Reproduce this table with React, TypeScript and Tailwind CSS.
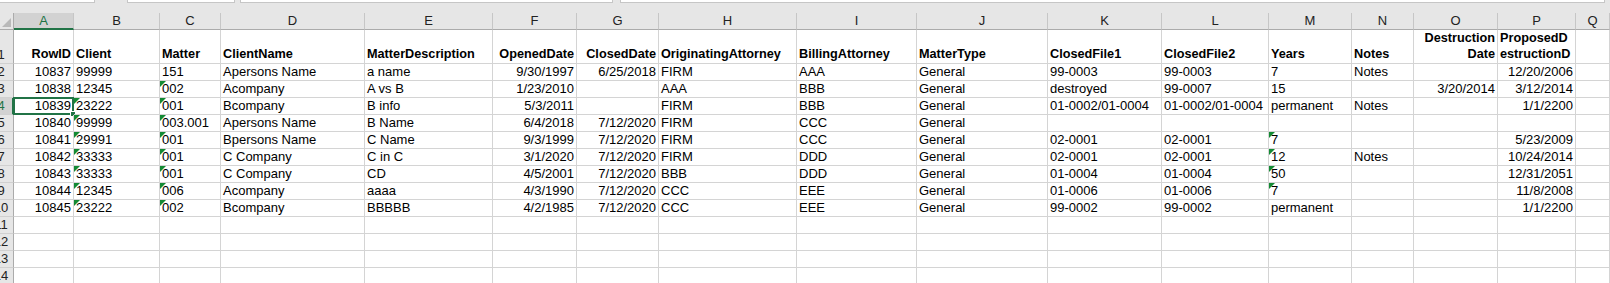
const widths = [
  "w-[60px]", "w-[86px]", "w-[61px]", "w-[144px]", "w-[128px]", "w-[84px]", "w-[82px]", "w-[138px]",
  "w-[120px]", "w-[131px]", "w-[114px]", "w-[107px]", "w-[83px]", "w-[62px]", "w-[84px]", "w-[78px]", "w-[34px]",
];
const letters = ["A", "B", "C", "D", "E", "F", "G", "H", "I", "J", "K", "L", "M", "N", "O", "P", "Q"];

// columns that hold numbers / dates (right aligned)
const rightCols = [0, 5, 6, 14, 15];

const rows = [
  ["10837", "99999", "151", "Apersons Name", "a name", "9/30/1997", "6/25/2018", "FIRM", "AAA", "General", "99-0003", "99-0003", "7", "Notes", "", "12/20/2006"],
  ["10838", "12345", "002", "Acompany", "A vs B", "1/23/2010", "", "AAA", "BBB", "General", "destroyed", "99-0007", "15", "", "3/20/2014", "3/12/2014"],
  ["10839", "23222", "001", "Bcompany", "B info", "5/3/2011", "", "FIRM", "BBB", "General", "01-0002/01-0004", "01-0002/01-0004", "permanent", "Notes", "", "1/1/2200"],
  ["10840", "99999", "003.001", "Apersons Name", "B Name", "6/4/2018", "7/12/2020", "FIRM", "CCC", "General", "", "", "", "", "", ""],
  ["10841", "29991", "001", "Bpersons Name", "C Name", "9/3/1999", "7/12/2020", "FIRM", "CCC", "General", "02-0001", "02-0001", "7", "", "", "5/23/2009"],
  ["10842", "33333", "001", "C Company", "C in C", "3/1/2020", "7/12/2020", "FIRM", "DDD", "General", "02-0001", "02-0001", "12", "Notes", "", "10/24/2014"],
  ["10843", "33333", "001", "C Company", "CD", "4/5/2001", "7/12/2020", "BBB", "DDD", "General", "01-0004", "01-0004", "50", "", "", "12/31/2051"],
  ["10844", "12345", "006", "Acompany", "aaaa", "4/3/1990", "7/12/2020", "CCC", "EEE", "General", "01-0006", "01-0006", "7", "", "", "11/8/2008"],
  ["10845", "23222", "002", "Bcompany", "BBBBB", "4/2/1985", "7/12/2020", "CCC", "EEE", "General", "99-0002", "99-0002", "permanent", "", "", "1/1/2200"],
];

// cells showing the green "number stored as text" marker, row-col
const flagged = new Set([
  "3-2", "4-1", "4-2", "5-1", "5-2", "6-1", "6-2", "7-1", "7-2", "8-1", "8-2", "9-1", "9-2", "10-1", "10-2",
  "6-12", "7-12", "8-12", "9-12",
]);

const headers = [
  "RowID", "Client", "Matter", "ClientName", "MatterDescription", "OpenedDate", "ClosedDate", "OriginatingAttorney",
  "BillingAttorney", "MatterType", "ClosedFile1", "ClosedFile2", "Years", "Notes",
];

const RowHead = ({ n, selected }: { n: number; selected?: boolean }) => (
  <div
    className={`w-[14px] shrink-0 h-full flex items-end overflow-hidden font-normal text-[13px] border-b border-[#d0d0d0] ${
      selected ? "bg-[#d2d2d2] text-[#217346] border-r-2 border-r-[#217346]" : "bg-[#e6e6e6] text-[#222] border-r border-r-[#ababab]"
    }`}
  >
    <div className="w-[26px] shrink-0 -ml-[12px] text-center leading-[16px]">{n}</div>
  </div>
);

const Flag = () => (
  <div className="absolute left-0 top-0 w-0 h-0 border-t-[6px] border-r-[6px] border-t-[#138a34] border-r-transparent" />
);

const DataRow = ({ n, cells }: { n: number; cells: string[] }) => (
  <div className="flex h-[17px]">
    <RowHead n={n} selected={n === 4} />
    {widths.map((w, c) => (
      <div
        key={c}
        className={`${w} shrink-0 h-full relative flex items-end px-[2px] pb-[1px] whitespace-nowrap border-r border-b border-[#d4d4d4] ${
          rightCols.includes(c) ? "justify-end" : ""
        }`}
      >
        {flagged.has(`${n}-${c}`) && <Flag />}
        <span className="leading-[15px]">{cells[c] ?? ""}</span>
        {n === 4 && c === 0 && (
          <>
            <div className="absolute -left-[1px] -top-[1px] -right-[1px] -bottom-[1px] border-2 border-[#217346]" />
            <div className="absolute -right-[3px] -bottom-[3px] w-[6px] h-[6px] bg-[#217346] border border-white" />
          </>
        )}
      </div>
    ))}
  </div>
);

export default function App() {
  return (
    <div className="w-[1610px] h-[283px] overflow-hidden bg-white text-[13px] text-black font-['Liberation_Sans',Arial,sans-serif]">
      {/* bottom edge of the formula bar */}
      <div className="h-[13px] bg-[#e6e6e6] flex items-start">
        <div className="w-[95px] h-[3px] bg-white border-b border-r border-[#c6c6c6]" />
        <div className="w-[32px]" />
        <div className="w-[108px] h-[3px] bg-white border-b border-x border-[#c6c6c6]" />
        <div className="w-[5px]" />
        <div className="w-[373px] h-[3px] bg-white border-b border-x border-[#c6c6c6]" />
        <div className="w-[7px]" />
        <div className="w-[985px] h-[3px] bg-white border-b border-x border-[#c6c6c6]" />
      </div>

      {/* column letters */}
      <div className="flex h-[17px] text-[#222] text-[13px]">
        <div className="w-[14px] shrink-0 h-full bg-[#e6e6e6] border-b border-r border-[#ababab] flex items-end justify-end">
          <svg width="9" height="9" viewBox="0 0 9 9" className="mb-[2px] mr-[2px]">
            <polygon points="9,0 9,9 0,9" fill="#b9b9b9" />
          </svg>
        </div>
        {widths.map((w, c) => (
          <div
            key={c}
            className={`${w} shrink-0 h-full flex items-center justify-center border-r border-[#c6c6c6] ${
              c === 0 ? "bg-[#d2d2d2] text-[#217346] border-b-2 border-b-[#217346]" : "bg-[#e6e6e6] border-b border-b-[#ababab]"
            }`}
          >
            {letters[c]}
          </div>
        ))}
      </div>

      {/* header row */}
      <div className="flex h-[34px] font-bold text-[12.7px]">
        <RowHead n={1} />
        {widths.map((w, c) => (
          <div
            key={c}
            className={`${w} shrink-0 h-full flex items-end px-[2px] pb-[1px] whitespace-nowrap border-r border-b border-[#d4d4d4] ${
              rightCols.includes(c) && c !== 15 ? "justify-end text-right" : ""
            }`}
          >
            {c === 14 ? (
              <span className="leading-[16px]">Destruction<br />Date</span>
            ) : c === 15 ? (
              <span className="leading-[16px]">ProposedD<br />estructionD</span>
            ) : (
              <span className="leading-[15px]">{headers[c] ?? ""}</span>
            )}
          </div>
        ))}
      </div>

      {rows.map((r, i) => (
        <DataRow key={i} n={i + 2} cells={r} />
      ))}
      {[11, 12, 13, 14].map((n) => (
        <DataRow key={n} n={n} cells={[]} />
      ))}
    </div>
  );
}
